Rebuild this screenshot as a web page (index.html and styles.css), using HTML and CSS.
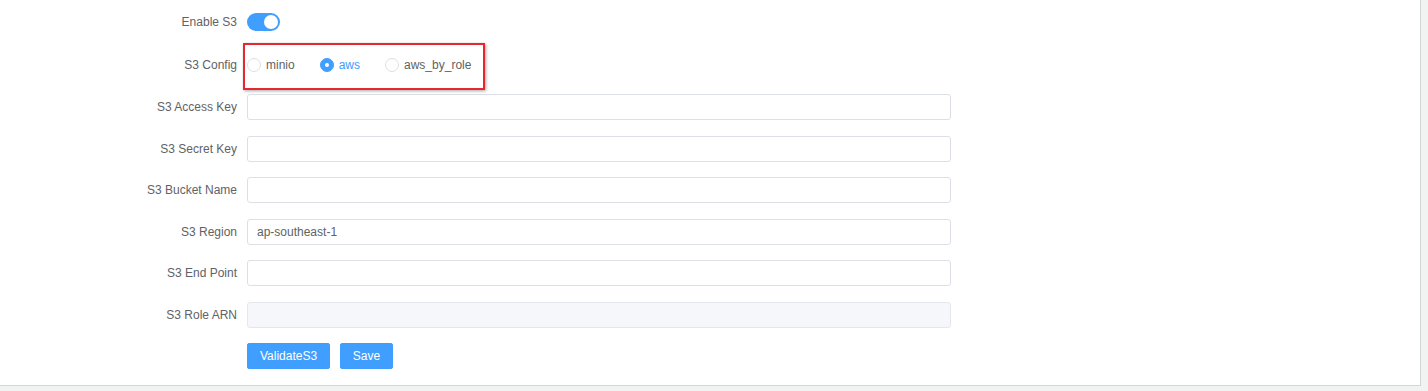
FILE: index.html
```html
<!DOCTYPE html>
<html lang="en">

<head>
  <meta charset="UTF-8">
  <meta name="viewport" content="width=device-width, initial-scale=1.0">
  <title>S3 Settings</title>
  <link rel="stylesheet" href="styles.css">
</head>

<body>
  <div class="panel">
    <form class="form">
      <div class="row row-switch">
        <label class="label">Enable S3</label>
        <div class="field">
          <span class="switch is-on"><span class="knob"></span></span>
        </div>
      </div>
      <div class="row row-radio">
        <label class="label">S3 Config</label>
        <div class="field">
          <div class="radio-group">
            <span class="radio"><span class="dot"></span><span class="radio-text">minio</span></span>
            <span class="radio checked"><span class="dot"></span><span class="radio-text">aws</span></span>
            <span class="radio"><span class="dot"></span><span class="radio-text">aws_by_role</span></span>
          </div>
        </div>
      </div>
      <div class="row">
        <label class="label">S3 Access Key</label>
        <div class="field"><input class="input" type="text"></div>
      </div>
      <div class="row">
        <label class="label">S3 Secret Key</label>
        <div class="field"><input class="input" type="text"></div>
      </div>
      <div class="row">
        <label class="label">S3 Bucket Name</label>
        <div class="field"><input class="input" type="text"></div>
      </div>
      <div class="row">
        <label class="label">S3 Region</label>
        <div class="field"><input class="input" type="text" value="ap-southeast-1"></div>
      </div>
      <div class="row">
        <label class="label">S3 End Point</label>
        <div class="field"><input class="input" type="text"></div>
      </div>
      <div class="row">
        <label class="label">S3 Role ARN</label>
        <div class="field"><input class="input" type="text" disabled></div>
      </div>
      <div class="row">
        <label class="label"></label>
        <div class="field buttons">
          <button class="btn btn-validate" type="button">ValidateS3</button>
          <button class="btn btn-save" type="button">Save</button>
        </div>
      </div>
    </form>
  </div>
</body>

</html>
```

FILE: styles.css
```css
* {
  margin: 0;
  padding: 0;
  box-sizing: border-box;
}

html,
body {
  background-color: #f1f2f2;
  font-family: "Liberation Sans", Arial, sans-serif;
  font-size: 12px;
  color: #606266;
}

.panel {
  width: 1421px;
  height: 386px;
  background-color: #fff;
  border-right: 1px solid #d3d6d6;
  border-bottom: 1px solid #d3d6d6;
}

.form {
  padding-top: 9px;
}

.row {
  display: flex;
  align-items: center;
  height: 26px;
  margin-bottom: 15.5px;
}

.row-switch {
  margin-bottom: 17px;
}

.row-radio {
  margin-bottom: 16px;
}

.label {
  width: 247px;
  padding-right: 10px;
  text-align: right;
  color: #606266;
}

.field {
  display: flex;
  align-items: center;
}

/* switch */
.switch {
  display: flex;
  align-items: center;
  justify-content: flex-end;
  width: 33px;
  height: 18px;
  border-radius: 9px;
  background-color: #409eff;
  padding-right: 2px;
}

.knob {
  width: 14px;
  height: 14px;
  border-radius: 50%;
  background-color: #fff;
}

/* radios */
.radio-group {
  position: relative;
  display: flex;
  align-items: center;
  height: 14px;
}

.radio-group::after {
  content: "";
  position: absolute;
  left: -4px;
  top: -15px;
  width: 238px;
  height: 43px;
  border: 2px solid #e8262e;
  box-shadow: 1px 1px 3px rgba(0, 0, 0, 0.35);
}

.radio {
  display: flex;
  align-items: center;
  margin-right: 25px;
}

.radio:last-child {
  margin-right: 0;
}

.dot {
  width: 14px;
  height: 14px;
  border: 1px solid #dcdfe6;
  border-radius: 50%;
  background-color: #fff;
}

.radio-text {
  padding-left: 5px;
  color: #606266;
}

.radio.checked .dot {
  border-color: #409eff;
  background-color: #409eff;
  display: flex;
  align-items: center;
  justify-content: center;
}

.radio.checked .dot::after {
  content: "";
  width: 4px;
  height: 4px;
  border-radius: 50%;
  background-color: #fff;
}

.radio.checked .radio-text {
  color: #409eff;
}

/* inputs */
.input {
  width: 704px;
  height: 26px;
  border: 1px solid #dcdfe6;
  border-radius: 3px;
  padding: 0 9px;
  font-family: "Liberation Sans", Arial, sans-serif;
  font-size: 12px;
  color: #606266;
  background-color: #fff;
  outline: none;
}

.input:disabled {
  background-color: #f5f7fa;
  border-color: #e4e7ed;
}

/* buttons */
.buttons {
  gap: 10px;
}

.btn {
  height: 26px;
  border: 1px solid #409eff;
  border-radius: 2px;
  background-color: #409eff;
  color: #fff;
  font-family: "Liberation Sans", Arial, sans-serif;
  font-size: 12px;
  cursor: pointer;
}

.btn-validate {
  width: 83px;
}

.btn-save {
  width: 53px;
}
```
